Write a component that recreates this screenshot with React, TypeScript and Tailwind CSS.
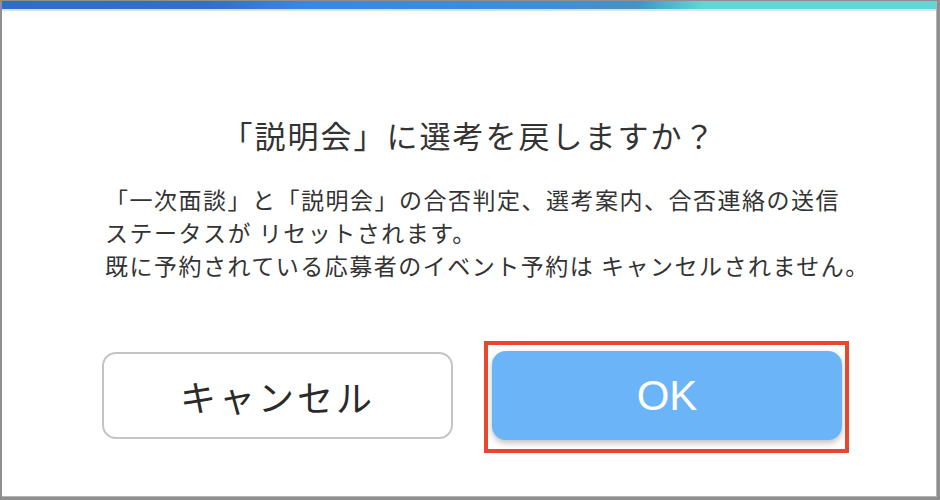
import React from "react";

export default function App() {
  const jp = { fontFamily: '"Noto Sans CJK JP", "Noto Sans", sans-serif' };
  return (
    <div className="w-[940px] h-[500px] bg-[#8f8f8f] pt-[1px] pl-[2px] pr-[3px] pb-[3px] flex">
      <div className="flex-1 flex flex-col bg-white border-r border-b border-[#b4b4b4]">
        <div className="h-[8px] bg-[linear-gradient(90deg,#2f6fc2_0%,#3170c4_22%,#3a86e2_32%,#3f8ed6_55%,#4592c6_68%,#55b8d0_72%,#63d4d3_75%,#63d4d3_100%)]" />
        <div className="h-[2px] bg-[#cfe6f2]" />
        <div className="flex-1 flex flex-col" style={jp}>
          <h1 className="mt-[104px] text-center text-[31px] leading-[40px] tracking-[2px] text-[#333333] font-normal">
            「説明会」に選考を戻しますか？
          </h1>
          <div className="mt-[28px] pl-[103px] text-[23px] leading-[33px] tracking-[1.5px] text-[#333333]">
            <p>「一次面談」と「説明会」の合否判定、選考案内、合否連絡の送信</p>
            <p>ステータスが リセットされます。</p>
            <p>既に予約されている応募者のイベント予約は キャンセルされません。</p>
          </div>
          <div className="mt-[69px] pl-[100px] flex items-start gap-[39px]">
            <button className="mt-[1px] w-[351px] h-[87px] rounded-[14px] border-2 border-[#c4c4c4] bg-white text-[36px] tracking-[3px] text-[#2a2a2a]">
              キャンセル
            </button>
            <div className="relative">
              <button
                className="w-[350px] h-[89px] rounded-[14px] bg-[#6bb4f8] text-white text-[42px] shadow-[0_3px_6px_rgba(0,0,0,0.25)]"
                style={{ fontFamily: '"Liberation Sans", Arial, sans-serif' }}
              >
                OK
              </button>
              <div className="absolute left-[-8px] top-[-10px] w-[365px] h-[112px] border-[4px] border-[#e9472b] pointer-events-none" />
            </div>
          </div>
        </div>
      </div>
    </div>
  );
}
